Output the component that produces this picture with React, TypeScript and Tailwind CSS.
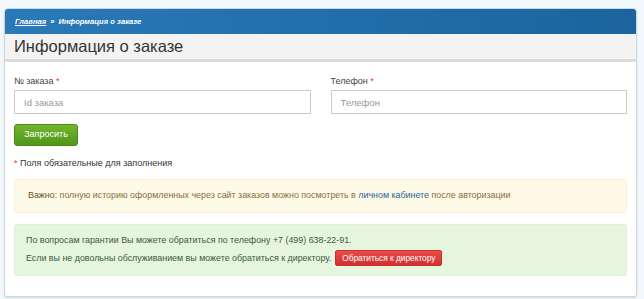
// Order info page — breadcrumb header, lookup form, notices.
export default function App() {
  return (
    <div className="h-[299px] w-[644px] bg-[#f1f9fc] pl-[4px] pr-[7px] pt-[8px]" style={{ fontFamily: '"Liberation Sans", Arial, sans-serif' }}>
      <div className="h-[289px] overflow-hidden rounded-t-[4px] rounded-b-[3px] border border-[#cfd6dc] bg-white shadow-[0_1px_2px_rgba(0,0,0,0.12)]">
        {/* Breadcrumb bar */}
        <div className="flex h-[25px] items-center bg-gradient-to-r from-[#2a7ab8] to-[#1b649e] px-[10px] text-[7.6px] font-bold italic text-white">
          <a className="underline">Главная</a>
          <span className="mx-[4px]">»</span>
          <span>Информация о заказе</span>
        </div>
        {/* Title */}
        <div className="flex h-[28px] items-center border-b-[3px] border-[#dcdcdc] bg-[#f3f3f3] px-[9px] text-[16.5px] text-[#333]">
          Информация о заказе
        </div>

        <div className="px-[9px] pt-[13px]">
          <div className="grid grid-cols-2 gap-[20px]">
            <div>
              <label className="block text-[9px] leading-[12px] text-[#444]">№ заказа <span className="text-[#e33]">*</span></label>
              <input placeholder="Id заказа" className="mt-[3px] h-[24px] w-full border border-[#ccc] px-[9px] text-[9.5px] placeholder:text-[#999]" />
            </div>
            <div>
              <label className="block text-[9px] leading-[12px] text-[#444]">Телефон <span className="text-[#e33]">*</span></label>
              <input placeholder="Телефон" className="mt-[3px] h-[24px] w-full border border-[#ccc] px-[9px] text-[9.5px] placeholder:text-[#999]" />
            </div>
          </div>
          <button className="mt-[10px] h-[22px] w-[64px] rounded-[3px] border border-[#4f8a16] bg-gradient-to-b from-[#72b62c] to-[#4f961a] text-[9px] text-white">
            Запросить
          </button>
          <p className="mt-[11px] text-[9px] leading-[12px] text-[#333]"><span className="text-[#e33]">*</span> Поля обязательные для заполнения</p>

          <div className="mt-[10px] flex h-[34px] items-center rounded-[3px] border border-[#fbf1d3] bg-[#fdfbe7] px-[13px] text-[8.9px] text-[#8a6d3b]">
            <span><b className="font-normal text-[#6a5226]">Важно</b>: полную историю оформленных через сайт заказов можно посмотреть в <a className="text-[#2a6496]">личном кабинете</a> после авторизации</span>
          </div>

          <div className="mt-[11px] rounded-[3px] border border-[#dff0d8] bg-[#e6f5de] px-[11px] pb-[9px] pt-[9px] text-[8.9px] leading-[12px] text-[#3c5a3c]">
            <p>По вопросам гарантии Вы можете обратиться по телефону +7 (499) 638-22-91.</p>
            <p className="mt-[4px] flex items-center">
              Если вы не довольны обслуживанием вы можете обратиться к директору.
              <button className="ml-[4px] h-[16px] rounded-[2px] border border-[#c9302c] bg-gradient-to-b from-[#e94b4b] to-[#d22f2f] px-[6px] text-[8.3px] text-white">Обратиться к директору</button>
            </p>
          </div>
        </div>
      </div>
    </div>
  );
}
